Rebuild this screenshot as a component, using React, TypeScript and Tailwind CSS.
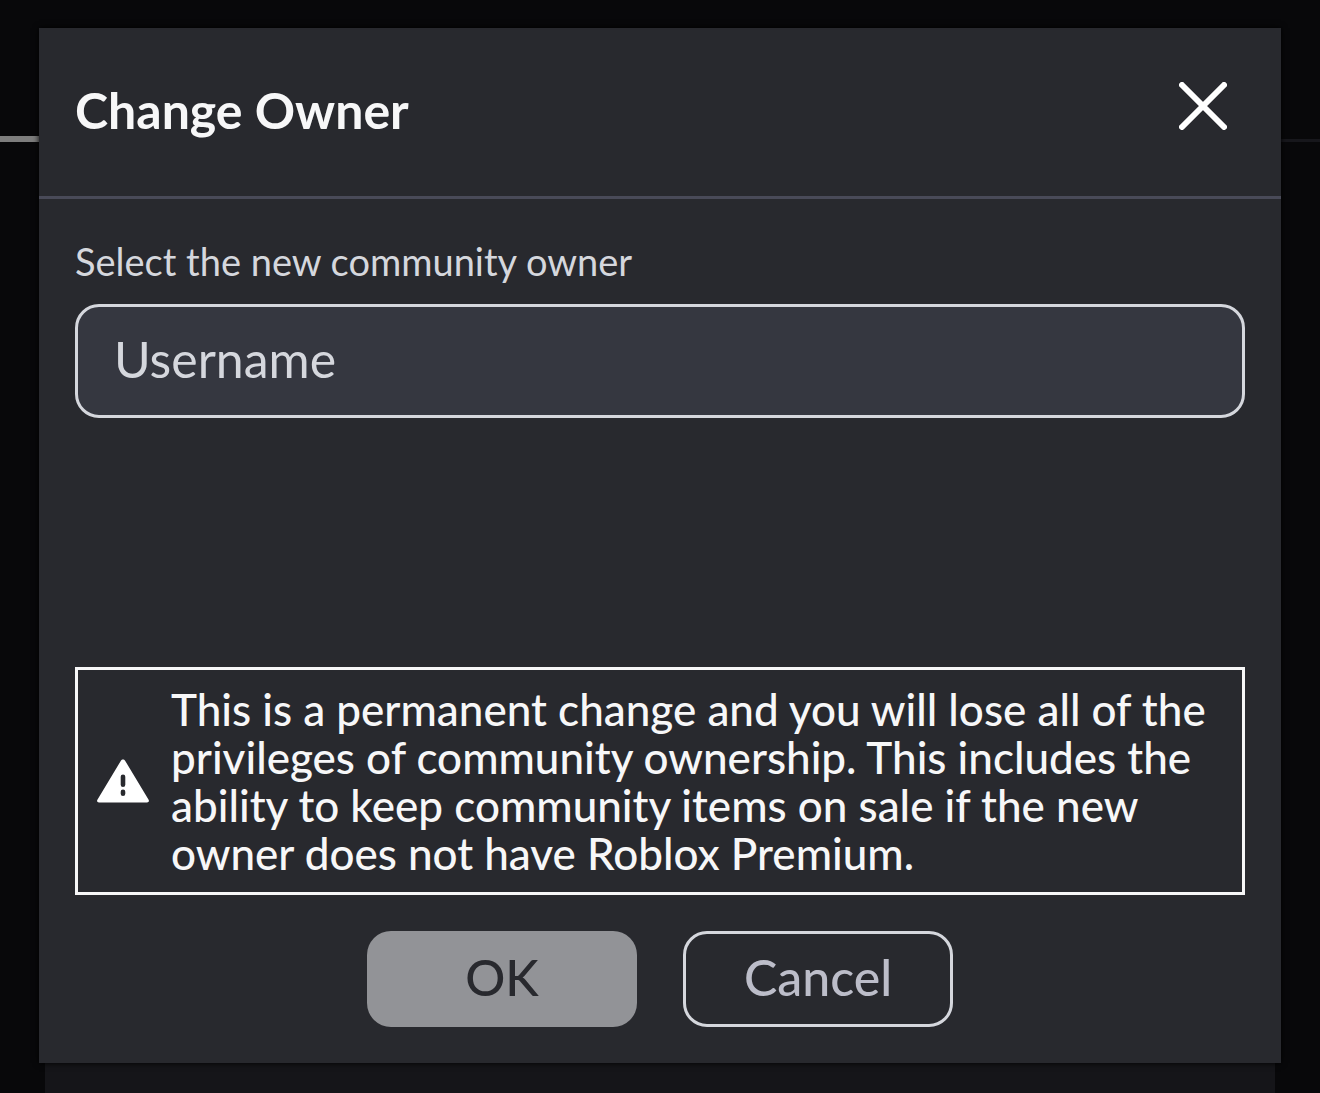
import { useState } from "react";
import type { ReactNode } from "react";
import clsx from "clsx";

type DialogButtonProps = {
    children: ReactNode;
    disabled?: boolean;
    className?: string;
}

function DialogButton({ children, disabled, className }: DialogButtonProps) {
    return (
        <button
            type="button"
            disabled={disabled}
            className={clsx('h-24 w-[270px] rounded-3xl pb-1 text-[50px] leading-[48px] font-medium', className)}
        >
            {children}
        </button>
    );
}

function CloseIcon() {
    return (
        <svg viewBox="0 0 48 48" className="size-12" fill="none" stroke="currentColor" strokeWidth="6" strokeLinecap="round" aria-hidden="true">
            <path d="M3 3l42 42M45 3L3 45" />
        </svg>
    );
}

function WarningIcon() {
    return (
        <svg viewBox="0 0 52 44" className="h-11 w-[52px] shrink-0 text-white" aria-hidden="true">
            <path
                fill="currentColor"
                fillRule="evenodd"
                d="M23.9 1.7C24.8 0.1 27.2 0.1 28.1 1.7L51.6 40.8C52.4 42.1 51.6 43.5 50 43.5H2C0.4 43.5 -0.4 42.1 0.4 40.8ZM26 15.5a2.3 2.3 0 0 0-2.3 2.3v8a2.3 2.3 0 0 0 4.6 0v-8A2.3 2.3 0 0 0 26 15.5ZM26 30.5a2.3 2.3 0 0 0-2.3 2.3v1.9a2.3 2.3 0 0 0 4.6 0v-1.9A2.3 2.3 0 0 0 26 30.5Z"
            />
        </svg>
    );
}

// dimmed group page that stays visible around the dialog
function PageBehind() {
    return (
        <div className="absolute inset-0 flex flex-col" aria-hidden="true">
            <div className="flex h-[142px] items-end border-b-3 border-[#17171c]">
                <div className="-mb-[3px] h-1.5 w-1/2 bg-[#7d7d7d]" />
            </div>
            <div className="mx-[45px] mt-6 flex-1 bg-[#151519]" />
        </div>
    );
}

export default function App() {
    const [username, setUsername] = useState('');

    return (
        <div className="relative min-h-screen bg-[#08080a] pt-7 font-['Lato',sans-serif]">
            <PageBehind />
            <div role="dialog" aria-labelledby="dialog-title" className="relative mx-[39px] bg-[#28292e] shadow-[0_0_6px_#000000]">
                <div className="flex h-[171px] items-center justify-between border-b-3 border-[#494a58] pr-[54px] pl-9">
                    <h1 id="dialog-title" className="pb-1 text-[50px] leading-[56px] font-bold text-[#f7f7f8]">Change Owner</h1>
                    <button type="button" aria-label="Close" className="mb-3 text-white">
                        <CloseIcon />
                    </button>
                </div>
                <div className="px-9 pt-11 pb-9">
                    <label htmlFor="username" className="block text-[38px] leading-[36px] text-[#d5d7dd]">
                        Select the new community owner
                    </label>
                    <input
                        id="username"
                        type="text"
                        placeholder="Username"
                        value={username}
                        onChange={(e) => setUsername(e.target.value)}
                        className="mt-[25px] block h-[114px] w-full rounded-3xl border-3 border-[#d5d7dd] bg-[#353740] px-9 pb-1 text-[50px] text-[#f7f7f8] outline-none placeholder:text-[#d5d7dd]"
                    />
                    <div className="mt-[249px] flex items-center gap-[22px] border-3 border-[#f7f7f8] py-[15px] pr-4 pl-[19px] text-[#f7f7f8]">
                        <WarningIcon />
                        <p className="text-[44px] leading-[48px] font-medium">
                            This is a permanent change and you will lose all of the privileges of community ownership. This includes the ability to keep community items on sale if the new owner does not have Roblox Premium.
                        </p>
                    </div>
                    <div className="mt-9 flex justify-center gap-[46px]">
                        <DialogButton disabled={!username} className="bg-[#929397] text-[#28292e]">OK</DialogButton>
                        <DialogButton className="border-3 border-[#d5d7dd] text-[#bcbdc9]">Cancel</DialogButton>
                    </div>
                </div>
            </div>
        </div>
    );
}
